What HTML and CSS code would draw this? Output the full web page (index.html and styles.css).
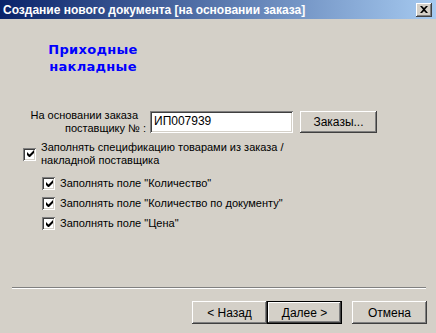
FILE: index.html
```html
<!DOCTYPE html>
<html lang="ru">
<head>
    <meta charset="UTF-8">
    <title>Создание нового документа [на основании заказа]</title>
    <link rel="stylesheet" href="styles.css">
</head>
<body>
<div class="window">
    <div class="titlebar">
        <span class="title">Создание нового документа [на основании заказа]</span>
        <span class="close">
            <svg width="8" height="7" viewBox="0 0 8 7"><path d="M0 0h2l2 2 2-2h2L5 3.5 8 7H6L4 5 2 7H0l3-3.5z" fill="#000"/></svg>
        </span>
    </div>

    <div class="content">
        <div class="heading">Приходные<br>накладные</div>

        <div class="order-row">
            <div class="order-label">
                <span class="l1">На основании заказа</span>
                <span>поставщику № :</span>
            </div>
            <div class="field">ИП007939</div>
            <div class="btn order-btn">Заказы...</div>
        </div>

        <div class="check main-check">
            <span class="box"><svg width="7" height="7" viewBox="0 0 7 7"><path d="M0 2v3l2 2h1l4-4V0L2.5 4.5z" fill="#000"/></svg></span>
            <span class="text">Заполнять спецификацию товарами из заказа /<br>накладной поставщика</span>
        </div>

        <div class="sub-checks">
            <div class="check">
                <span class="box"><svg width="7" height="7" viewBox="0 0 7 7"><path d="M0 2v3l2 2h1l4-4V0L2.5 4.5z" fill="#000"/></svg></span>
                <span class="text">Заполнять поле "Количество"</span>
            </div>
            <div class="check">
                <span class="box"><svg width="7" height="7" viewBox="0 0 7 7"><path d="M0 2v3l2 2h1l4-4V0L2.5 4.5z" fill="#000"/></svg></span>
                <span class="text">Заполнять поле "Количество по документу"</span>
            </div>
            <div class="check">
                <span class="box"><svg width="7" height="7" viewBox="0 0 7 7"><path d="M0 2v3l2 2h1l4-4V0L2.5 4.5z" fill="#000"/></svg></span>
                <span class="text">Заполнять поле "Цена"</span>
            </div>
        </div>
    </div>

    <div class="footer">
        <div class="separator"></div>
        <div class="buttons">
            <div class="btn">&lt; Назад</div>
            <div class="btn default">Далее &gt;</div>
            <div class="btn cancel">Отмена</div>
        </div>
    </div>
</div>
</body>
</html>
```

FILE: styles.css
```css
body {
    margin: 0;
    font-family: "Liberation Sans", Arial, sans-serif;
    font-size: 11px;
    background: #d4d0c8;
}
.window {
    width: 436px;
    height: 333px;
    display: flex;
    flex-direction: column;
    background: #d4d0c8;
    color: #000;
}
.titlebar {
    height: 19px;
    display: flex;
    align-items: center;
    justify-content: space-between;
    padding: 0 4px 0 3px;
    background: linear-gradient(to right, #0a246a, #a6caf0);
}
.title {
    color: #fff;
    font-weight: bold;
    font-size: 12px;
}
.close {
    width: 16px;
    height: 14px;
    box-sizing: border-box;
    display: flex;
    align-items: center;
    justify-content: center;
    background: #d4d0c8;
    box-shadow: inset -1px -1px #404040, inset 1px 1px #fff, inset -2px -2px #808080;
}
.content {
    flex: 1;
}
.heading {
    width: 186px;
    margin-top: 22px;
    text-align: center;
    font-family: "DejaVu Sans", Verdana, sans-serif;
    font-weight: bold;
    font-size: 13px;
    letter-spacing: 0.3px;
    line-height: 17px;
    color: #0000ff;
}
.order-row {
    display: flex;
    align-items: flex-start;
    margin-top: 36px;
}
.order-label {
    width: 146px;
    margin-top: -2px;
    line-height: 13px;
    display: flex;
    flex-direction: column;
    align-items: flex-end;
}
.order-label .l1 {
    margin-right: 8px;
}
.field {
    width: 143px;
    height: 22px;
    box-sizing: border-box;
    margin-left: 4px;
    padding: 3px 4px;
    background: #fff;
    font-size: 12px;
    line-height: 14px;
    box-shadow: inset 1px 1px #808080, inset -1px -1px #fff, inset 2px 2px #404040, inset -2px -2px #d4d0c8;
}
.btn {
    width: 75px;
    height: 23px;
    box-sizing: border-box;
    display: flex;
    align-items: center;
    justify-content: center;
    font-size: 12px;
    background: #d4d0c8;
    box-shadow: inset -1px -1px #404040, inset 1px 1px #fff, inset -2px -2px #808080;
}
.order-btn {
    width: 77px;
    height: 22px;
    margin-left: 7px;
}
.check {
    display: flex;
    align-items: center;
    line-height: 13px;
}
.box {
    width: 13px;
    height: 13px;
    box-sizing: border-box;
    flex: none;
    display: flex;
    align-items: center;
    justify-content: center;
    background: #fff;
    box-shadow: inset 1px 1px #808080, inset -1px -1px #fff, inset 2px 2px #404040, inset -2px -2px #d4d0c8;
}
.box svg {
    margin: 0 0 1px 1px;
}
.check .text {
    margin-left: 5px;
}
.main-check {
    margin: 6px 0 0 23px;
}
.sub-checks {
    display: flex;
    flex-direction: column;
    gap: 7px;
    margin: 10px 0 0 42px;
}
.footer {
    padding-bottom: 9px;
}
.separator {
    margin: 0 10px 0 12px;
    border-top: 1px solid #808080;
    border-bottom: 1px solid #fff;
    height: 0;
}
.buttons {
    display: flex;
    justify-content: flex-end;
    margin-top: 12px;
    padding-right: 9px;
}
.btn.default {
    box-shadow: inset 0 0 0 1px #000, inset -2px -2px #404040, inset 2px 2px #fff, inset -3px -3px #808080;
}
.btn.cancel {
    margin-left: 10px;
}
```
